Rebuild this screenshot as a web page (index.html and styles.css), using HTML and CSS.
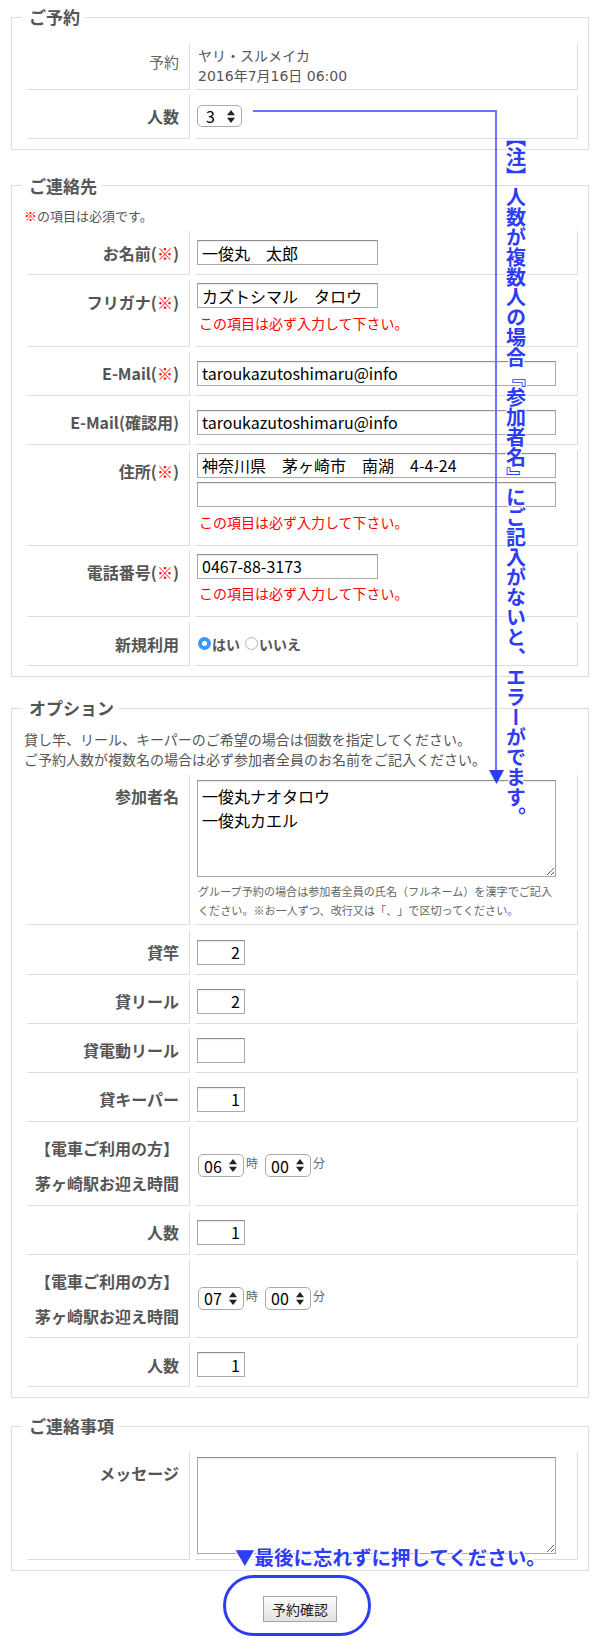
FILE: index.html
```html
<!DOCTYPE html>
<html lang="ja">
<head>
<meta charset="utf-8">
<title>ご予約</title>
<link rel="stylesheet" href="styles.css">
</head>
<body>
<div class="page">
  <form class="form">
    <fieldset class="fs fs1">
      <legend>ご予約</legend>
      <table class="ftable">
        <tr><th class="plain">予約</th><td><div class="info">ヤリ・スルメイカ<br>2016年7月16日 06:00</div></td></tr>
        <tr><th>人数</th><td><select class="sel sel-num"><option>3</option></select></td></tr>
      </table>
    </fieldset>

    <fieldset class="fs fs2">
      <legend>ご連絡先</legend>
      <p class="note"><span class="req">※</span>の項目は必須です。</p>
      <table class="ftable">
        <tr><th>お名前(<span class="req">※</span>)</th><td><input class="txt short" type="text" value="一俊丸　太郎"></td></tr>
        <tr><th>フリガナ(<span class="req">※</span>)</th><td><input class="txt short" type="text" value="カズトシマル　タロウ"><div class="err">この項目は必ず入力して下さい。</div></td></tr>
        <tr><th>E-Mail(<span class="req">※</span>)</th><td><input class="txt long" type="text" value="taroukazutoshimaru@info"></td></tr>
        <tr><th>E-Mail(確認用)</th><td><input class="txt long" type="text" value="taroukazutoshimaru@info"></td></tr>
        <tr><th>住所(<span class="req">※</span>)</th><td><input class="txt long" type="text" value="神奈川県　茅ヶ崎市　南湖　4-4-24"><input class="txt long second" type="text" value=""><div class="err">この項目は必ず入力して下さい。</div></td></tr>
        <tr><th>電話番号(<span class="req">※</span>)</th><td><input class="txt short" type="text" value="0467-88-3173"><div class="err">この項目は必ず入力して下さい。</div></td></tr>
        <tr><th>新規利用</th><td><div class="radios"><label class="rad"><input type="radio" name="new" checked><span>はい</span></label><label class="rad"><input type="radio" name="new"><span>いいえ</span></label></div></td></tr>
      </table>
    </fieldset>

    <fieldset class="fs fs3">
      <legend>オプション</legend>
      <p class="desc">貸し竿、リール、キーパーのご希望の場合は個数を指定してください。<br>ご予約人数が複数名の場合は必ず参加者全員のお名前をご記入ください。</p>
      <table class="ftable">
        <tr><th>参加者名</th><td><textarea class="area">一俊丸ナオタロウ
一俊丸カエル</textarea><p class="hint">グループ予約の場合は参加者全員の氏名（フルネーム）を漢字でご記入<br>ください。※お一人ずつ、改行又は「、」で区切ってください。</p></td></tr>
        <tr><th>貸竿</th><td><input class="txt num" type="text" value="2"></td></tr>
        <tr><th>貸リール</th><td><input class="txt num" type="text" value="2"></td></tr>
        <tr><th>貸電動リール</th><td><input class="txt num" type="text" value=""></td></tr>
        <tr><th>貸キーパー</th><td><input class="txt num" type="text" value="1"></td></tr>
        <tr><th>【電車ご利用の方】<br>茅ヶ崎駅お迎え時間</th><td><div class="time"><select class="sel sel-time"><option>06</option></select><span class="unit">時</span><select class="sel sel-time"><option>00</option></select><span class="unit">分</span></div></td></tr>
        <tr><th>人数</th><td><input class="txt num" type="text" value="1"></td></tr>
        <tr><th>【電車ご利用の方】<br>茅ヶ崎駅お迎え時間</th><td><div class="time"><select class="sel sel-time"><option>07</option></select><span class="unit">時</span><select class="sel sel-time"><option>00</option></select><span class="unit">分</span></div></td></tr>
        <tr><th>人数</th><td><input class="txt num" type="text" value="1"></td></tr>
      </table>
    </fieldset>

    <fieldset class="fs fs4">
      <legend>ご連絡事項</legend>
      <table class="ftable">
        <tr><th>メッセージ</th><td><textarea class="area msg"></textarea></td></tr>
      </table>
    </fieldset>

    <div class="submit"><button type="button" class="btn">予約確認</button></div>
  </form>

  <svg class="annot-svg" width="602" height="1646" viewBox="0 0 602 1646" aria-hidden="true">
    <polyline points="253,111 496,111 496,771" fill="none" stroke="#6a74ff" stroke-width="2"/>
    <polygon points="489,770 504,770 496.5,784" fill="#2e3cf2"/>
    <rect x="224.5" y="1576.5" width="145" height="58" rx="29" ry="29" fill="none" stroke="#2e3cf2" stroke-width="3"/>
  </svg>
  <div class="annot-v">【注】人数が複数人の場合『参加者名』にご記入がないと、エラーがでます。</div>
  <div class="annot-b">▼最後に忘れずに押してください。</div>
</div>
</body>
</html>
```

FILE: styles.css
```css
html, body {
  margin: 0;
  padding: 0;
  background: #fff;
}

body {
  font-family: "Noto Sans CJK JP", "Noto Sans", sans-serif;
  color: #555;
  text-spacing-trim: space-all;
}

.page {
  position: relative;
  width: 602px;
  height: 1646px;
  box-sizing: border-box;
  padding: 5px 13px 0 11px;
}

.form {
  margin: 0;
}

.fs {
  margin: 0;
  min-width: 0;
  border: 1px solid #ddd;
  padding: 8.5px 5px 5px 10px;
}

.fs2 { margin-top: 24px; }
.fs3 { margin-top: 19px; }
.fs4 { margin-top: 16px; }

.fs legend {
  font-size: 17px;
  font-weight: 700;
  line-height: 24px;
  color: #555;
  padding: 0 5px 0 7px;
}

.note {
  margin: 0;
  padding-left: 2px;
  font-size: 13px;
  line-height: 20px;
  color: #555;
}

.desc {
  margin: 0;
  padding-left: 2px;
  font-size: 14px;
  line-height: 20.5px;
  color: #555;
}

.req {
  color: #f00;
  font-weight: 400;
}

.ftable {
  width: 100%;
  table-layout: fixed;
  border-collapse: separate;
  border-spacing: 5px;
}

.ftable th {
  box-sizing: border-box;
  width: 163px;
  padding: 4.5px 10px 4px 0;
  text-align: right;
  vertical-align: top;
  font-size: 16px;
  font-weight: 700;
  line-height: 34.6px;
  color: #555;
  white-space: nowrap;
  border-right: 1px solid #ddd;
  border-bottom: 1px solid #ddd;
}

.ftable th.plain {
  font-weight: 400;
  font-size: 15px;
  color: #666;
  padding-top: 2.5px;
}

.ftable td {
  padding: 3px 2px;
  vertical-align: middle;
  border-right: 1px solid #ddd;
  border-bottom: 1px solid #ddd;
}

.info {
  font-family: "DejaVu Sans", "Noto Sans CJK JP", sans-serif;
  font-size: 14px;
  line-height: 20px;
  color: #555;
  padding-left: 1px;
}

.txt {
  display: block;
  box-sizing: border-box;
  height: 25px;
  margin: 0;
  padding: 0 4px;
  border: 1px solid #aaa;
  border-top-color: #8f8f8f;
  box-shadow: inset 0 1px 1px rgba(0, 0, 0, 0.08);
  background: #fff;
  font-family: "Noto Sans CJK JP", "Noto Sans", sans-serif;
  font-size: 16px;
  color: #000;
  border-radius: 0;
  outline: none;
}

.txt.short { width: 181px; }
.txt.long { width: 359px; }
.txt.second { margin-top: 4.5px; }
.txt.num {
  width: 48px;
  text-align: right;
  padding-right: 4px;
}

.err {
  margin: 4.5px 0 10px;
  font-size: 14px;
  line-height: 20px;
  color: #f00;
  padding-left: 2px;
}

.sel {
  -webkit-appearance: none;
  appearance: none;
  display: block;
  box-sizing: border-box;
  margin: 0;
  border: 1px solid #aaa;
  border-radius: 5px;
  background: #fff url("data:image/svg+xml;utf8,<svg xmlns='http://www.w3.org/2000/svg' width='8' height='13' viewBox='0 0 8 13'><path d='M4 0 L8 5.2 H0 Z M0 7.8 H8 L4 13 Z' fill='%23222'/></svg>") no-repeat right 6px center;
  font-family: "Noto Sans CJK JP", "Noto Sans", sans-serif;
  font-size: 16px;
  color: #000;
  line-height: 20px;
}

.sel-num {
  width: 45px;
  height: 22px;
  padding: 0 16px 0 8px;
}

.sel-time {
  width: 46px;
  height: 23px;
  padding: 0 14px 0 5px;
}

.time {
  display: flex;
  align-items: flex-start;
  padding-left: 1px;
}

.unit {
  font-size: 12px;
  line-height: 17px;
  color: #666;
  margin: 0 7px 0 2px;
}

.radios {
  display: flex;
  align-items: center;
  font-size: 14px;
  font-weight: 700;
  color: #555;
  padding-left: 1px;
}

.rad {
  display: flex;
  align-items: center;
  margin-right: 5px;
}

.rad input {
  -webkit-appearance: none;
  appearance: none;
  width: 13px;
  height: 13px;
  margin: 0 1px 0 0;
  border-radius: 50%;
  border: 1px solid #b5b5b5;
  background: #fff;
  box-sizing: border-box;
}

.rad input:checked {
  border: none;
  background: radial-gradient(circle, #fff 0 2.2px, #3b99fc 2.8px);
}

.area {
  display: block;
  box-sizing: border-box;
  width: 359px;
  height: 97px;
  margin: 2px 0 0;
  padding: 3px 4px;
  border: 1px solid #aaa;
  border-top-color: #8f8f8f;
  box-shadow: inset 0 1px 1px rgba(0, 0, 0, 0.08);
  font-family: "Noto Sans CJK JP", "Noto Sans", sans-serif;
  font-size: 16px;
  line-height: 24px;
  color: #000;
  border-radius: 0;
  outline: none;
}

.area.msg {
  margin: 2px 0;
}

.hint {
  margin: 5.5px 0 2px;
  padding-left: 1px;
  font-size: 11.1px;
  line-height: 18.5px;
  color: #666;
  white-space: nowrap;
}

.submit {
  text-align: center;
  margin-top: 25px;
  padding-left: 0;
}

.btn {
  width: 74px;
  height: 26px;
  padding: 0;
  border: 1px solid #a5a5a5;
  border-radius: 0;
  background: linear-gradient(#fcfcfc, #e2e2e2);
  font-family: "Noto Sans CJK JP", "Noto Sans", sans-serif;
  font-size: 14px;
  color: #222;
}

.annot-svg {
  position: absolute;
  left: 0;
  top: 0;
  pointer-events: none;
}

.annot-v {
  position: absolute;
  left: 505.5px;
  top: 126.7px;
  writing-mode: vertical-rl;
  font-size: 20px;
  line-height: 20px;
  font-weight: 700;
  color: #2e3cf2;
  white-space: nowrap;
  text-shadow: 1px 0 0 #fff, -1px 0 0 #fff, 0 1px 0 #fff, 0 -1px 0 #fff, 1px 1px 0 #fff, -1px -1px 0 #fff, 1px -1px 0 #fff, -1px 1px 0 #fff;
}

.annot-b {
  position: absolute;
  left: 235px;
  top: 1544px;
  font-size: 19.5px;
  line-height: 25px;
  font-weight: 700;
  color: #2e3cf2;
  white-space: nowrap;
  text-shadow: 1px 0 0 #fff, -1px 0 0 #fff, 0 1px 0 #fff, 0 -1px 0 #fff, 1px 1px 0 #fff, -1px -1px 0 #fff, 1px -1px 0 #fff, -1px 1px 0 #fff;
}
```
